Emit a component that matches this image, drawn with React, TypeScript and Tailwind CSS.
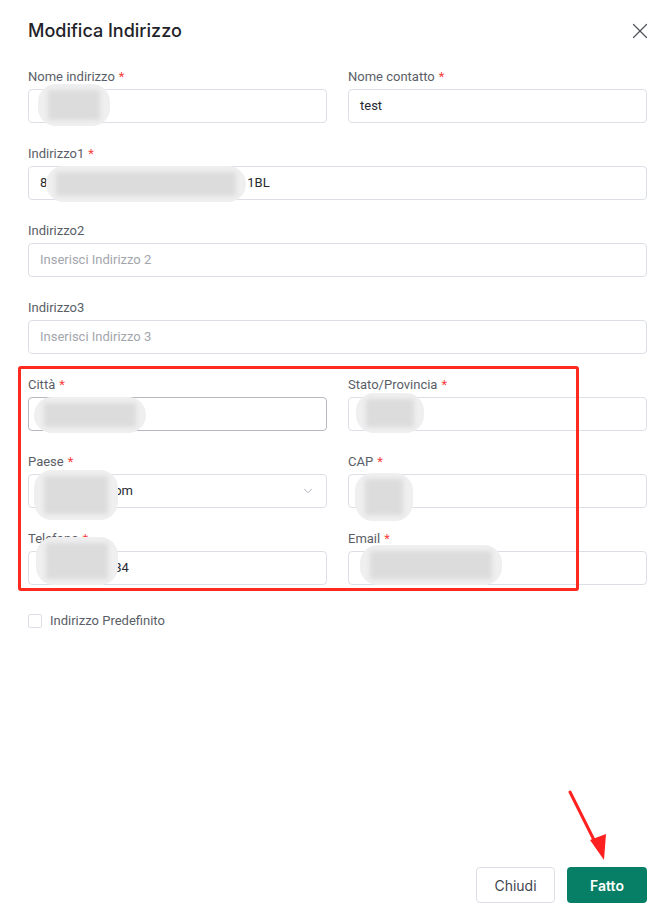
import { X, ChevronDown } from "lucide-react";

type FieldProps = {
  label: string;
  required?: boolean;
  value?: string;
  placeholder?: string;
  select?: boolean;
  focused?: boolean;
};

const Field = ({ label, required, value, placeholder, select, focused }: FieldProps) => {
  return (
    <div className="flex flex-col gap-[4px] font-['Roboto',sans-serif]">
      <label className="text-[13px] leading-[16px] text-[#5a5e66]">
        {label}
        {required && <span className="ml-[4px] text-[#f53f3f]">*</span>}
      </label>
      <div
        className={`flex h-[34px] items-center rounded-[4px] border bg-white px-[11px] text-[13px] ${
          focused ? "border-[#b5b8bf]" : "border-[#dcdfe6]"
        }`}
      >
        {value ? (
          <span className="flex-1 text-[#262a30]">{value}</span>
        ) : (
          <span className="flex-1 text-[#a3a6ad]">{placeholder}</span>
        )}
        {select && <ChevronDown className="h-[14px] w-[14px] text-[#a3a6ad]" strokeWidth={1.5} />}
      </div>
    </div>
  );
};

const Blur = ({ className }: { className: string }) => (
  <div className={`pointer-events-none absolute rounded-[18px] bg-[#efeff0] ${className}`}>
    <div className="absolute inset-x-[10px] inset-y-[6px] bg-[#dcdcdd] blur-[2px]" />
  </div>
);

export default function App() {
  return (
    <div className="relative flex h-[917px] flex-col bg-white pl-[28px] pr-[19px] font-['Inter',sans-serif]">
      <div className="flex h-[42px] items-center justify-between pt-[20px]">
        <h2 className="text-[18px] font-medium leading-[22px] text-[#1f2329]">Modifica Indirizzo</h2>
        <X className="-my-[2px] mr-[-6px] h-[26px] w-[26px] text-[#4e5258]" strokeWidth={1.1} />
      </div>

      <div className="mt-[27px] flex flex-col gap-[23px]">
        <div className="grid grid-cols-2 gap-x-[21px]">
          <Field label="Nome indirizzo" required value=" " />
          <Field label="Nome contatto" required value="test" />
        </div>
        <Field label="Indirizzo1" required value={"8" + "\u00a0".repeat(62) + "1BL"} />
        <Field label="Indirizzo2" placeholder="Inserisci Indirizzo 2" />
        <Field label="Indirizzo3" placeholder="Inserisci Indirizzo 3" />
        <div className="grid grid-cols-2 gap-x-[21px] gap-y-[23px]">
          <Field label="Città" required value=" " focused />
          <Field label="Stato/Provincia" required value=" " />
          <Field label="Paese" required value={"\u00a0".repeat(23) + "om"} select />
          <Field label="CAP" required value=" " />
          <Field label="Telefono" required value={"\u00a0".repeat(23) + "34"} />
          <Field label="Email" required value=" " />
        </div>
      </div>

      <label className="mt-[26px] flex items-center gap-[8px] font-['Roboto',sans-serif]">
        <span className="h-[14px] w-[14px] rounded-[2px] border border-[#dcdfe6] bg-white" />
        <span className="text-[13px] text-[#5a5e66]">Indirizzo Predefinito</span>
      </label>

      <div className="mt-auto flex justify-end gap-[12px] pb-[14px]">
        <button className="h-[36px] w-[79px] rounded-[4px] border border-[#dcdfe6] bg-white text-[14px] text-[#3f4550]">
          Chiudi
        </button>
        <button className="h-[36px] w-[80px] rounded-[4px] bg-[#077f66] text-[14px] font-semibold text-white">
          Fatto
        </button>
      </div>

      {/* blurred values */}
      <Blur className="left-[38px] top-[84px] h-[42px] w-[72px]" />
      <Blur className="left-[46px] top-[166px] h-[36px] w-[200px]" />
      <Blur className="left-[34px] top-[397px] h-[36px] w-[112px]" />
      <Blur className="left-[356px] top-[393px] h-[40px] w-[68px]" />
      <Blur className="left-[34px] top-[470px] h-[50px] w-[84px]" />
      <Blur className="left-[355px] top-[473px] h-[48px] w-[58px]" />
      <Blur className="left-[36px] top-[537px] h-[48px] w-[82px]" />
      <Blur className="left-[360px] top-[545px] h-[40px] w-[142px]" />

      {/* annotation */}
      <div className="pointer-events-none absolute left-[18px] top-[366px] h-[225px] w-[561px] rounded-[3px] border-[3px] border-[#ff2a1f]" />
      <svg className="pointer-events-none absolute left-[560px] top-[788px]" width="56" height="76" viewBox="0 0 56 76">
        <path d="M10 4 L38 60" stroke="#ff2020" strokeWidth="3" strokeLinecap="round" />
        <path d="M30 52 L44 72 L46 46 Z" fill="#ff2020" />
      </svg>
    </div>
  );
}
